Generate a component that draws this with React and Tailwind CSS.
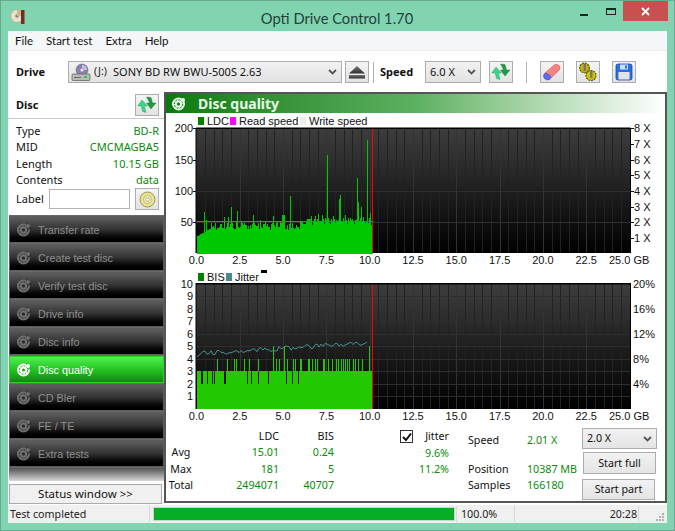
import React from "react";

const SANS = "font-['Liberation_Sans',Arial,sans-serif]";

function rng(seed) {
  let s = seed;
  return () => {
    s = (s * 1664525 + 1013904223) % 4294967296;
    return s / 4294967296;
  };
}

function Arrows({ size = 20 }) {
  return (
    <svg width={size} height={size} viewBox="0 0 20 20">
      <path d="M5 5 L10.5 11 L7.5 11 L9 17.5 L5.5 16.5 L4.2 11 L0.8 11 Z" fill="#35d68a" stroke="#1f9a5a" strokeWidth="0.4" />
      <path d="M9.5 2 L14 2.5 L15.5 8 L19 8 L14 14 L9.5 8 L12.5 8 L11.5 5.5 Z" fill="#1f9a45" stroke="#0f7a32" strokeWidth="0.4" />
    </svg>
  );
}

function ToolBtn({ children, className = "" }) {
  return (
    <div className={`w-[24px] h-[22px] border border-[#adadad] bg-gradient-to-b from-[#f4f4f4] to-[#e2e2e2] flex items-center justify-center shrink-0 ${className}`}>
      {children}
    </div>
  );
}

function Chevron() {
  return (
    <svg width="9" height="6" viewBox="0 0 9 6" className="shrink-0">
      <path d="M1 1 L4.5 4.5 L8 1" fill="none" stroke="#555" strokeWidth="1.8" />
    </svg>
  );
}

function NavIcon({ active }) {
  const c = active ? "#ffffff" : "#6f6f6f";
  const d = active ? "#17b017" : "#262626";
  return (
    <svg width="16" height="16" viewBox="0 0 16 16" className="shrink-0">
      <circle cx="7.5" cy="8" r="6.5" fill={c} />
      <circle cx="7.5" cy="8" r="4.2" fill="none" stroke={d} strokeWidth="1" strokeDasharray="2 1.2" />
      <circle cx="7.5" cy="8" r="1.6" fill={d} />
      <path d="M10 1 L14 3 L15 7 L12 8 L10 5 Z" fill={d} opacity="0.7" />
      <circle cx="12" cy="4" r="2" fill={c} />
    </svg>
  );
}

function NavItem({ label, active }) {
  return (
    <div
      className={
        active
          ? "h-[27px] mb-px pt-px border border-[#2fd02f] bg-gradient-to-b from-[#4cf04c] via-[#25c425] to-[#0a8a0a] flex items-center pl-[6px] gap-[6px] text-white text-[10.8px]"
          : "h-[27px] mb-px pt-px border border-[#5c5c5c] bg-gradient-to-b from-[#5e5e5e] via-[#333333] to-[#000000] flex items-center pl-[6px] gap-[6px] text-[#8f8f8f] text-[10.8px]"
      }
    >
      <NavIcon active={active} />
      <span>{label}</span>
    </div>
  );
}

function Row({ k, v }) {
  return (
    <div className="flex justify-between h-[16.3px] items-center">
      <span className="text-[#111]">{k}</span>
      <span className="text-[#0b8a0b]">{v}</span>
    </div>
  );
}

function Grid({ top, bottom, hLines, idPrefix }) {
  const xs = [];
  for (let i = 1; i < 50; i++) xs.push(196.5 + i * 8.664);
  return (
    <g>
      <defs>
        <linearGradient id={idPrefix} x1="0" y1="0" x2="0" y2="1">
          <stop offset="0" stopColor="#3e3e3e" />
          <stop offset="1" stopColor="#000000" />
        </linearGradient>
      </defs>
      <rect x="196" y={top} width="434.5" height={bottom - top} fill={`url(#${idPrefix})`} />
      {xs.map((x, i) => (
        <line key={i} x1={Math.round(x) + 0.5} x2={Math.round(x) + 0.5} y1={top} y2={bottom} stroke={(i + 1) % 5 === 0 ? "#333333" : "#222222"} />
      ))}
      {hLines.map((y, i) => (
        <line key={i} x1="196" x2="630" y1={y + 0.5} y2={y + 0.5} stroke="#2e2e2e" />
      ))}
    </g>
  );
}

function XLabels({ y }) {
  const labels = ["0.0", "2.5", "5.0", "7.5", "10.0", "12.5", "15.0", "17.5", "20.0", "22.5"];
  return (
    <g fontSize="11" fill="#111" textAnchor="middle">
      {labels.map((l, i) => (
        <text key={l} x={196.5 + i * 43.3} y={y}>{l}</text>
      ))}
      <text x="609" y={y} textAnchor="start">25.0 GB</text>
    </g>
  );
}

function Chart1() {
  const r = rng(17);
  const spikes = { 204: 66, 206: 54, 224: 58, 231: 74, 237: 68, 253: 62, 273: 60, 282: 62, 283: 62, 284: 62, 290: 92, 327: 158, 339: 88, 340: 93, 357: 121, 358: 82, 361: 75, 367: 181, 370: 65, 228: 58, 318: 64, 311: 60, 322: 62, 333: 60, 345: 62 };
  let d = "";
  for (let x = 197; x < 373; x++) {
    const t = x - 197;
    let base;
    if (t < 14) base = 28 + t * 0.9;
    else if (t < 110) base = 38 + r() * 13;
    else base = 46 + r() * 11;
    if (r() > 0.93) base += 8;
    const v = spikes[x] || base;
    d += `M${x} 253.5V${(253.6 - v * 0.626).toFixed(1)}`;
  }
  const left = [[200, 128], [150, 160], [100, 191], [50, 222]];
  const right = [[8, 128], [7, 144], [6, 160], [5, 175], [4, 191], [3, 207], [2, 222], [1, 238]];
  return (
    <svg width="499" height="142" viewBox="166 127 499 142" className="block shrink-0 overflow-visible">
      <Grid top={128} bottom={253} hLines={[160, 191, 222]} idPrefix="g1" />
      <path d={d} stroke="#00c800" strokeWidth="1" shapeRendering="crispEdges" fill="none" transform="translate(0.5 0)" />
      <line x1="196" x2="372" y1="221.5" y2="221.5" stroke="#e020d0" strokeWidth="1" />
      <line x1="372.5" x2="372.5" y1="128" y2="253" stroke="#ff0000" />
      <rect x="196" y="127.5" width="434.5" height="1.5" fill="#000" />
      <line x1="196" x2="196" y1="128" y2="253" stroke="#000" />
      <line x1="630.5" x2="630.5" y1="128" y2="253" stroke="#000" />
      <g fontSize="11" fill="#111" textAnchor="end">
        {left.map(([v, y]) => <text key={v} x="193" y={y + 4}>{v}</text>)}
      </g>
      {left.map(([v, y]) => <line key={v} x1="193" x2="196" y1={y + 0.5} y2={y + 0.5} stroke="#111" />)}
      <g fontSize="11" fill="#111">
        {right.map(([v, y]) => (
          <g key={v}>
            <line x1="631" x2="634" y1={y + 0.5} y2={y + 0.5} stroke="#111" />
            <text x="634" y={y + 4}>{v} X</text>
          </g>
        ))}
      </g>
      <XLabels y={264} />
    </svg>
  );
}

function Chart2() {
  const yOf = (v) => 409 - v * 12.55;
  const r = rng(91);
  const notches = [201, 202, 207, 212, 214, 224, 225, 247, 251, 258, 268, 286, 292, 298];
  const fours = [157, 186, 207, 213, 238, 253, 279, 333, 342, 367, 385, 391, 405, 408, 428, 432, 441, 450, 456, 473, 478, 488, 500, 512, 518, 528, 535, 541, 547, 552, 565, 570, 578, 592, 611].map((z) => Math.round(z / 3 + 165));
  const fives = [273, 284, 369];
  let base = "";
  for (let x = 197; x < 373; x++) {
    const v = notches.includes(x) ? 2 : 3;
    base += `M${x} 409V${yOf(v).toFixed(1)}`;
  }
  let four = "";
  fours.forEach((x) => { four += `M${x} ${yOf(3)}V${yOf(4)}`; });
  let five = "";
  fives.forEach((x) => { five += `M${x} ${yOf(3)}V${yOf(5)}`; });
  const pts = [];
  for (let x = 197; x < 369; x += 2) {
    const t = (x - 197) / 172;
    let y = 354 - t * 11 + (r() - 0.5) * 5;
    if (x < 203) y = 357 - (x - 197) * 0.9;
    pts.push(`${x},${y.toFixed(1)}`);
  }
  const hLines = [1, 2, 3, 4, 5, 6, 7, 8, 9].map((v) => Math.round(yOf(v)));
  return (
    <svg width="499" height="141" viewBox="166 283 499 141" className="block shrink-0 overflow-visible">
      <Grid top={283} bottom={409} hLines={hLines} idPrefix="g2" />
      <path d={base} stroke="#22c800" strokeWidth="1" shapeRendering="crispEdges" fill="none" transform="translate(0.5 0)" />
      <path d={four + five} stroke="#22c800" strokeWidth="1" shapeRendering="crispEdges" fill="none" transform="translate(0.5 0)" />
      <polyline points={pts.join(" ")} fill="none" stroke="#4a8f8f" strokeWidth="1" />
      <line x1="372.5" x2="372.5" y1="283" y2="409" stroke="#ff0000" />
      <rect x="196" y="283" width="434.5" height="1.5" fill="#000" />
      <line x1="196" x2="196" y1="283" y2="409" stroke="#000" />
      <line x1="630.5" x2="630.5" y1="283" y2="409" stroke="#000" />
      <g fontSize="11" fill="#111" textAnchor="end">
        {[10, 9, 8, 7, 6, 5, 4, 3, 2, 1].map((v) => <text key={v} x="193" y={Math.round(yOf(v)) + 4}>{v}</text>)}
      </g>
      <g fontSize="11" fill="#111">
        {[[20, 284], [16, 309], [12, 334], [8, 359], [4, 384]].map(([v, y]) => (
          <text key={v} x="633" y={y + 4}>{v}%</text>
        ))}
      </g>
      <XLabels y={420} />
    </svg>
  );
}

function Legend({ items, extra }) {
  return (
    <div className="h-[14px] pl-[32px] pt-[2px] flex items-center text-[11px] text-[#111] shrink-0">
      {items.map(([c, t, w]) => (
        <div key={t} className="flex items-center" style={{ width: w }}>
          <span className="w-[6px] h-[8px] mr-[3px] shrink-0" style={{ backgroundColor: c }} />
          <span className="whitespace-nowrap">{t}</span>
        </div>
      ))}
      {extra}
    </div>
  );
}

export default function App() {
  return (
    <div className={`w-[675px] h-[531px] bg-[#80d4b0] flex flex-col overflow-hidden border border-[#6aa892] ${SANS} text-[12px] text-[#111]`}>
      {/* Title bar */}
      <div className="h-[30px] shrink-0 flex items-start">
        <svg width="16" height="18" viewBox="0 0 16 18" className="ml-[9px] mt-[6px] shrink-0">
          <circle cx="7" cy="9" r="6.5" fill="#e8e0c8" stroke="#a09880" strokeWidth="0.5" />
          <circle cx="7" cy="9" r="1.8" fill="#888" />
          <path d="M7 2.5 A6.5 6.5 0 0 1 13.5 9 L7 9 Z" fill="#c8b890" />
          <rect x="11" y="3" width="3.5" height="14" fill="#7a2a20" />
        </svg>
        <div className="flex-1 text-center font-['Lato',sans-serif] text-[14.7px] text-[#26413a] mt-[6px] pl-[68px]">Opti Drive Control 1.70</div>
        <div className="flex items-start mr-[6px] shrink-0">
          <div className="w-[8px] h-[2px] bg-[#222] mt-[13px] mr-[18px]" />
          <div className="w-[10px] h-[7px] border border-[#222] border-t-2 mt-[7px] mr-[7px]" />
          <div className="w-[45px] h-[20px] bg-[#c75050] flex items-center justify-center">
            <svg width="9" height="9" viewBox="0 0 9 9"><path d="M1 1 L8 8 M8 1 L1 8" stroke="#fff" strokeWidth="1.8" /></svg>
          </div>
        </div>
      </div>

      {/* Client */}
      <div className="mx-[7px] w-[659px] h-[492px] bg-white flex flex-col shrink-0">
        {/* Menu */}
        <div className="h-[19px] bg-[#f5f6f7] flex items-center pl-[7px] gap-[13px] shrink-0 font-['Lato',sans-serif] text-[11.5px] text-[#111]">
          <span>File</span><span>Start test</span><span>Extra</span><span>Help</span>
        </div>
        {/* Toolbar */}
        <div className="h-[42px] flex items-center pt-px shrink-0 border-t border-[#eeeeee]">
          <span className="ml-[8px] w-[52px] font-bold font-['Noto_Sans',sans-serif] text-[11px]">Drive</span>
          <div className="w-[274px] h-[22px] border border-[#adadad] bg-gradient-to-b from-[#f2f2f2] to-[#e2e2e2] flex items-center pl-[2px] pr-[4px] shrink-0">
            <svg width="20" height="19" viewBox="0 0 20 19" className="shrink-0">
              <circle cx="11" cy="7" r="6" fill="#8d80b0" stroke="#5a5080" strokeWidth="0.5" />
              <circle cx="11" cy="7" r="1.6" fill="#eee" />
              <path d="M11 2 A5 5 0 0 1 16 7 L13 7 A2 2 0 0 0 11 5 Z" fill="#c8c0e0" />
              <rect x="1" y="11" width="18" height="6.5" rx="1" fill="#b8bcb8" stroke="#666" strokeWidth="0.8" />
              <rect x="13" y="13" width="3" height="2" fill="#3cc43c" />
              <rect x="3" y="14" width="7" height="1" fill="#666" />
            </svg>
            <span className="ml-[3px] w-[19px] text-[#222] font-['Noto_Sans',sans-serif] text-[10.5px]">(J:)</span>
            <span className="flex-1 font-['Noto_Sans',sans-serif] text-[11px] text-[#111]">SONY BD RW BWU-500S 2.63</span>
            <Chevron />
          </div>
          <ToolBtn className="ml-[3px]">
            <svg width="18" height="16" viewBox="0 0 18 16">
              <defs>
                <linearGradient id="ej" x1="0" y1="0" x2="0" y2="1">
                  <stop offset="0" stopColor="#777" />
                  <stop offset="1" stopColor="#2e2e2e" />
                </linearGradient>
              </defs>
              <path d="M9 2 L17 9.5 L1 9.5 Z" fill="url(#ej)" />
              <rect x="1" y="11" width="16" height="3.5" fill="url(#ej)" />
            </svg>
          </ToolBtn>
          <div className="w-px h-[21px] bg-[#b0b0b0] ml-[4px]" />
          <span className="ml-[6px] w-[45px] font-bold font-['Noto_Sans',sans-serif] text-[11px]">Speed</span>
          <div className="w-[56px] h-[22px] border border-[#adadad] bg-gradient-to-b from-[#f2f2f2] to-[#e2e2e2] flex items-center justify-between pl-[4px] pr-[4px] shrink-0 font-['Noto_Sans',sans-serif] text-[11px]">
            <span>6.0 X</span><Chevron />
          </div>
          <ToolBtn className="ml-[8px]"><Arrows /></ToolBtn>
          <div className="w-px h-[21px] bg-[#b0b0b0] ml-[13px]" />
          <ToolBtn className="ml-[13px]">
            <svg width="20" height="20" viewBox="0 0 20 20">
              <path d="M3 11 L12 3 Q14 1.5 16.5 3 Q19 5 17.5 8 L9 16 Z" fill="#f48484" stroke="#c85050" strokeWidth="0.5" />
              <path d="M3 11 Q0.5 13.5 2 16 Q4.5 19 7.5 17.5 L9 16 Q9 12.5 3 11 Z" fill="#5a6cf0" stroke="#3040b0" strokeWidth="0.5" />
            </svg>
          </ToolBtn>
          <ToolBtn className="ml-[12px]">
            <svg width="20" height="20" viewBox="0 0 20 20">
              <circle cx="6.5" cy="6" r="4.8" fill="#c8b800" stroke="#5f5800" strokeDasharray="2 0.8" strokeWidth="1.2" />
              <rect x="5.5" y="2" width="2.5" height="7" fill="#777" />
              <circle cx="13" cy="13.5" r="5" fill="#d4c400" stroke="#5f5800" strokeDasharray="2 0.8" strokeWidth="1.2" />
              <rect x="12" y="9" width="2.5" height="7" fill="#777" />
            </svg>
          </ToolBtn>
          <ToolBtn className="ml-[12px]">
            <svg width="18" height="18" viewBox="0 0 18 18">
              <rect x="1" y="1" width="16" height="16" rx="2" fill="#2a70e0" stroke="#1a4aa0" strokeWidth="0.8" />
              <rect x="5" y="1.5" width="8" height="5" fill="#cfe0f8" />
              <rect x="10" y="2.5" width="2" height="3" fill="#2a70e0" />
              <rect x="3.5" y="9" width="11" height="7.5" fill="#e4e4e4" />
            </svg>
          </ToolBtn>
        </div>

        {/* Body */}
        <div className="h-[413px] flex shrink-0">
          {/* Left */}
          <div className="w-[156px] shrink-0 flex flex-col font-['Noto_Sans',sans-serif] text-[11px]">
            <div className="h-[27px] flex items-center justify-between pl-[8px] pr-[5px] border-b border-[#c8c8c8] shrink-0">
              <span className="font-bold text-[11px]">Disc</span>
              <ToolBtn><Arrows /></ToolBtn>
            </div>
            <div className="h-[96px] pl-[8px] pr-[5px] pt-[4px] shrink-0">
              <Row k="Type" v="BD-R" />
              <Row k="MID" v="CMCMAGBA5" />
              <Row k="Length" v="10.15 GB" />
              <Row k="Contents" v="data" />
              <div className="flex items-center">
                <span className="w-[33px]">Label</span>
                <div className="w-[81px] h-[20px] border border-[#b4b4b4] bg-white" />
                <ToolBtn className="ml-[5px] h-[21px]">
                  <svg width="17" height="17" viewBox="0 0 17 17">
                    <circle cx="8.5" cy="8.5" r="7.5" fill="#e8e48c" stroke="#808050" strokeWidth="0.8" />
                    <circle cx="8.5" cy="8.5" r="4" fill="#f4f2c0" stroke="#a0a060" strokeWidth="0.6" />
                    <circle cx="8.5" cy="8.5" r="1.8" fill="#fff" stroke="#808050" strokeWidth="0.6" />
                  </svg>
                </ToolBtn>
              </div>
            </div>
            <div className="ml-px bg-[#6a6a6a] shrink-0 pt-px flex flex-col font-['Liberation_Sans',Arial,sans-serif]">
              <NavItem label="Transfer rate" />
              <NavItem label="Create test disc" />
              <NavItem label="Verify test disc" />
              <NavItem label="Drive info" />
              <NavItem label="Disc info" />
              <NavItem label="Disc quality" active />
              <NavItem label="CD Bler" />
              <NavItem label="FE / TE" />
              <NavItem label="Extra tests" />
              <div className="h-[13px] bg-gradient-to-b from-[#555555] to-[#d8d8d8]" />
            </div>
            <div className="ml-px mt-[3px] w-[153px] h-[20px] border border-[#ababab] bg-[#f0f0f0] flex items-center justify-center text-[11.5px] shrink-0">
              Status window &gt;&gt;
            </div>
          </div>

          {/* Main */}
          <div className="w-[503px] h-[411px] border-2 border-[#555555] shrink-0 flex flex-col bg-white overflow-hidden">
            <div className="h-[19px] shrink-0 bg-gradient-to-r from-[#067a06] via-[#5cb060] to-[#ffffff] flex items-center pl-[5px]">
              <svg width="16" height="16" viewBox="0 0 16 16" className="shrink-0">
                <circle cx="7.5" cy="8" r="6.5" fill="#e8f8e8" />
                <circle cx="7.5" cy="8" r="4.2" fill="none" stroke="#0a7f0a" strokeWidth="1" strokeDasharray="2 1.2" />
                <circle cx="7.5" cy="8" r="1.6" fill="#0a7f0a" />
                <circle cx="12" cy="4" r="2" fill="#e8f8e8" />
              </svg>
              <span className="ml-[11px] font-bold text-[14px] text-[#e8fbe8] font-['Noto_Sans',sans-serif]">Disc quality</span>
            </div>
            <Legend items={[["#008000", "LDC", 32], ["#ff00ff", "Read speed", 70], ["#eeeeee", "Write speed", 80]]} />
            <Chart1 />
            <Legend
              items={[["#008000", "BIS", 28], ["#4a8a8a", "Jitter", 35]]}
              extra={<span className="w-[6px] h-[3px] bg-black self-start mt-[-1px]" />}
            />
            <Chart2 />
            {/* Stats */}
            <div className="flex-1 flex font-['Noto_Sans',sans-serif] text-[10.7px]">
              <div className="grid grid-cols-[30px_83px_55px] auto-rows-[16.3px] items-center mt-[4px] shrink-0">
                <span /><span className="text-right">LDC</span><span className="text-right">BIS</span>
                <span className="text-center">Avg</span><span className="text-right text-[#0b8a0b]">15.01</span><span className="text-right text-[#0b8a0b]">0.24</span>
                <span className="text-center">Max</span><span className="text-right text-[#0b8a0b]">181</span><span className="text-right text-[#0b8a0b]">5</span>
                <span className="text-center">Total</span><span className="text-right text-[#0b8a0b]">2494071</span><span className="text-right text-[#0b8a0b]">40707</span>
              </div>
              <div className="ml-[66px] w-[49px] shrink-0 mt-[4px] flex flex-col">
                <div className="h-[17px] flex items-center justify-between">
                  <div className="w-[13px] h-[13px] border border-[#333] bg-white flex items-center justify-center">
                    <svg width="10" height="10" viewBox="0 0 10 10"><path d="M1 5 L4 8 L9 1.5" fill="none" stroke="#111" strokeWidth="2" /></svg>
                  </div>
                  <span>Jitter</span>
                </div>
                <div className="h-[16px] flex items-center justify-end text-[#0b8a0b]">9.6%</div>
                <div className="h-[16px] flex items-center justify-end text-[#0b8a0b]">11.2%</div>
              </div>
              <div className="ml-[19px] w-[114px] shrink-0 mt-[8px] flex flex-col">
                <div className="h-[16px] flex items-center"><span className="w-[59px]">Speed</span><span className="text-[#0b8a0b]">2.01 X</span></div>
                <div className="h-[13px]" />
                <div className="h-[16px] flex items-center"><span className="w-[59px]">Position</span><span className="text-[#0b8a0b] whitespace-nowrap">10387 MB</span></div>
                <div className="h-[16px] flex items-center"><span className="w-[59px]">Samples</span><span className="text-[#0b8a0b]">166180</span></div>
              </div>
              <div className="w-[76px] shrink-0 flex flex-col mt-[4px]">
                <div className="h-[21px] w-[75px] border border-[#adadad] bg-gradient-to-b from-[#f2f2f2] to-[#e4e4e4] flex items-center justify-between px-[4px]">
                  <span>2.0 X</span><Chevron />
                </div>
                <div className="mt-[3px] ml-px h-[22px] w-[73px] border border-[#adadad] bg-gradient-to-b from-[#f2f2f2] to-[#e4e4e4] flex items-center justify-center">Start full</div>
                <div className="mt-[5px] h-[21px] w-[73px] border border-[#adadad] bg-gradient-to-b from-[#f2f2f2] to-[#e4e4e4] flex items-center justify-center">Start part</div>
              </div>
            </div>
          </div>
        </div>

        {/* Status bar */}
        <div className="h-[18px] bg-[#f0f0f0] flex items-center shrink-0 font-['Noto_Sans',sans-serif] text-[10.7px] text-[#222]">
          <span className="ml-[2px] w-[139px] shrink-0">Test completed</span>
          <div className="w-px h-[16px] bg-[#d8d8d8]" />
          <div className="ml-[3px] w-[302px] h-[14px] border border-[#d0d0d0] bg-[#06ae26] shrink-0" />
          <div className="ml-[1px] w-px h-[16px] bg-[#d8d8d8]" />
          <span className="ml-[4px] w-[53px] shrink-0">100.0%</span>
          <div className="w-px h-[16px] bg-[#d8d8d8]" />
          <span className="w-[122px] text-right shrink-0">20:28</span>
          <div className="ml-[1px] w-px h-[16px] bg-[#d8d8d8]" />
          <svg width="10" height="10" viewBox="0 0 10 10" className="ml-[16px] mt-[6px] shrink-0">
            <g fill="#b0b0b0">
              <rect x="7" y="1" width="2" height="2" /><rect x="4" y="4" width="2" height="2" /><rect x="7" y="4" width="2" height="2" />
              <rect x="1" y="7" width="2" height="2" /><rect x="4" y="7" width="2" height="2" /><rect x="7" y="7" width="2" height="2" />
            </g>
          </svg>
        </div>
      </div>
    </div>
  );
}
